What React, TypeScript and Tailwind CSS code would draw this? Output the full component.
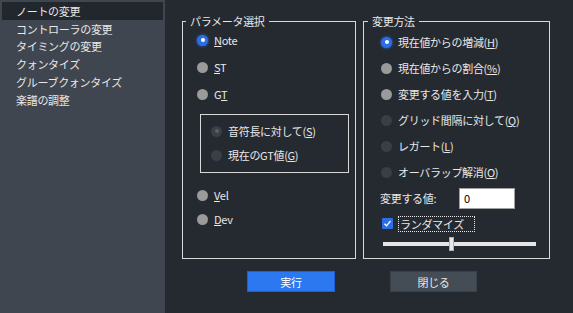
import React from "react";

const font = { fontFamily: '"Noto Sans CJK JP", "Noto Sans", sans-serif' };

function U({ children }: { children: React.ReactNode }) {
  return <span className="underline underline-offset-1">{children}</span>;
}

type RadioKind = "on" | "off" | "dim" | "dimOn";

function Radio({ kind }: { kind: RadioKind }) {
  if (kind === "on") {
    return (
      <span className="flex h-[11px] w-[11px] shrink-0 items-center justify-center rounded-full bg-[#2c6ee6] shadow-[0_0_3px_#2c6ee6]">
        <span className="h-[4px] w-[4px] rounded-full bg-white" />
      </span>
    );
  }
  if (kind === "dimOn") {
    return (
      <span className="flex h-[11px] w-[11px] shrink-0 items-center justify-center rounded-full bg-[#3a3e45]">
        <span className="h-[4px] w-[4px] rounded-full bg-[#5c6066]" />
      </span>
    );
  }
  if (kind === "dim") return <span className="h-[11px] w-[11px] shrink-0 rounded-full bg-[#3a3e45]" />;
  return <span className="h-[11px] w-[11px] shrink-0 rounded-full bg-[#9a9a9a]" />;
}

function Option({ kind, children, h = "h-[22px]" }: { kind: RadioKind; children: React.ReactNode; h?: string }) {
  return (
    <div className={`flex ${h} items-center gap-[6px] whitespace-nowrap`}>
      <Radio kind={kind} />
      <span>{children}</span>
    </div>
  );
}

const menu = ["ノートの変更", "コントローラの変更", "タイミングの変更", "クォンタイズ", "グルーブクォンタイズ", "楽譜の調整"];

export default function App() {
  return (
    <div className="flex h-[313px] w-[573px] bg-[#252a31] text-[11px] leading-4 tracking-[-0.3px] text-[#e8e8e8]" style={font}>
      <aside className="w-[165px] shrink-0 bg-[#404650] pt-[2px]">
        {menu.map((m, i) => (
          <div
            key={m}
            className={`ml-[2px] mr-[2px] flex h-[17.8px] items-center pl-[14px] ${i === 0 ? "bg-[#22262d]" : ""}`}
          >
            {m}
          </div>
        ))}
      </aside>

      <main className="flex flex-1 flex-col">
        <div className="ml-[17px] mt-[13px] flex gap-[7px]">
          <fieldset className="h-[246px] w-[174px] min-w-0 shrink-0 border border-[#d8d8d8] px-[14px]">
            <legend className="ml-[-11px] px-[4px] leading-4">パラメータ選択</legend>
            <Option kind="on"><U>N</U>ote</Option>
            <div className="mt-[5px]"><Option kind="off"><U>S</U>T</Option></div>
            <div className="mt-[5px]"><Option kind="off">G<U>T</U></Option></div>
            <div className="ml-[3px] mt-[9px] w-[149px] border border-[#d8d8d8] px-[10px] pb-[7px] pt-[6px]">
              <Option kind="dimOn" h="h-[20px]">音符長に対して(<U>S</U>)</Option>
              <div className="mt-[4px]"><Option kind="dim" h="h-[20px]">現在のGT値(<U>G</U>)</Option></div>
            </div>
            <div className="mt-[11px]"><Option kind="off"><U>V</U>el</Option></div>
            <div className="mt-[2px]"><Option kind="off"><U>D</U>ev</Option></div>
          </fieldset>

          <fieldset className="h-[246px] w-[187px] min-w-0 shrink-0 border border-[#d8d8d8] px-[17px]">
            <legend className="ml-[-13px] px-[4px] leading-4">変更方法</legend>
            <Option kind="on" h="h-[26px]">現在値からの増減(<U>H</U>)</Option>
            <Option kind="off" h="h-[26px]">現在値からの割合(<U>%</U>)</Option>
            <Option kind="off" h="h-[26px]">変更する値を入力(<U>T</U>)</Option>
            <Option kind="dim" h="h-[26px]">グリッド間隔に対して(<U>Q</U>)</Option>
            <Option kind="dim" h="h-[26px]">レガート(<U>L</U>)</Option>
            <Option kind="dim" h="h-[26px]">オーバラップ解消(<U>O</U>)</Option>
            <div className="ml-[-1px] flex h-[26px] items-center">
              <span className="w-[79px]">変更する値:</span>
              <div className="flex h-[21px] w-[56px] items-center border border-[#a0a0a0] bg-white pl-[4px] text-black">0</div>
            </div>
            <div className="ml-[1px] flex h-[25px] items-center gap-[5px]">
              <span className="flex h-[11px] w-[11px] items-center justify-center rounded-[1px] bg-[#2c6ee6]">
                <svg width="9" height="9" viewBox="0 0 9 9">
                  <path d="M1.5 4.8 L3.5 6.8 L7.5 2" stroke="white" strokeWidth="1.3" fill="none" />
                </svg>
              </span>
              <span className="border border-dotted border-[#e8e8e8] pl-[1px] pr-[10px] leading-[14px]">ランダマイズ</span>
            </div>
            <div className="ml-[2px] flex h-[16px] w-[153px] items-center">
              <div className="flex h-[4px] flex-1 items-center bg-[#e4e4e4]">
                <div className="ml-[66px] h-[14px] w-[5px] border border-[#b0b0b0] bg-[#e8e8e8]" />
              </div>
            </div>
          </fieldset>
        </div>

        <div className="mt-[12px] flex">
          <button className="ml-[82px] h-[21px] w-[88px] border border-[#1d5fd6] bg-[#2b78f0] text-white">実行</button>
          <button className="ml-[55px] h-[21px] w-[87px] border border-[#3a4048] bg-[#444c56] text-[#e8e8e8]">閉じる</button>
        </div>
      </main>
    </div>
  );
}
